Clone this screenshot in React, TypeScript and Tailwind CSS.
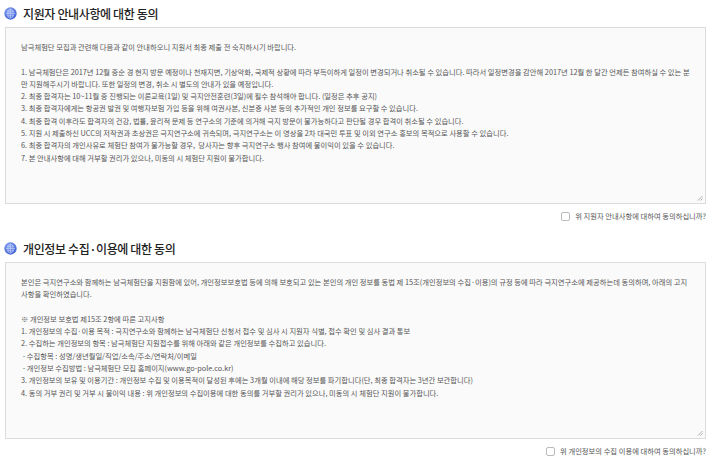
import React from "react";

const FONT = { fontFamily: '"Noto Sans CJK KR", "Noto Sans", sans-serif' };

const NOTICE = [
  "남극체험단 모집과 관련해 다음과 같이 안내하오니 지원서 최종 제출 전 숙지하시기 바랍니다.",
  "",
  "1. 남극체험단은 2017년 12월 중순 경 현지 방문 예정이나 천재지변, 기상악화, 국제적 상황에 따라 부득이하게 일정이 변경되거나 취소될 수 있습니다. 따라서 일정변경을 감안해 2017년 12월 한 달간 언제든 참여하실 수 있는 분만 지원해주시기 바랍니다. 또한 일정의 변경, 취소 시 별도의 안내가 있을 예정입니다.",
  "2. 최종 합격자는 10~11월 중 진행되는 이론교육(1일) 및 극지안전훈련(3일)에 필수 참석해야 합니다. (일정은 추후 공지)",
  "3. 최종 합격자에게는 항공권 발권 및 여행자보험 가입 등을 위해 여권사본, 신분증 사본 등의 추가적인 개인 정보를 요구할 수 있습니다.",
  "4. 최종 합격 이후라도 합격자의 건강, 법률, 윤리적 문제 등 연구소의 기준에 의거해 극지 방문이 불가능하다고 판단될 경우 합격이 취소될 수 있습니다.",
  "5. 지원 시 제출하신 UCC의 저작권과 초상권은 극지연구소에 귀속되며, 극지연구소는 이 영상을 2차 대국민 투표 및 이외 연구소 홍보의 목적으로 사용할 수 있습니다.",
  "6. 최종 합격자의 개인사유로 체험단 참여가 불가능할 경우,  당사자는 향후 극지연구소 행사 참여에 불이익이 있을 수 있습니다.",
  "7. 본 안내사항에 대해 거부할 권리가 있으나, 미동의 시 체험단 지원이 불가합니다.",
];

const PRIVACY = [
  "본인은 극지연구소와 함께하는 남극체험단을 지원함에 있어, 개인정보보호법 등에 의해 보호되고 있는 본인의 개인 정보를 동법 제 15조(개인정보의 수집·이용)의 규정 등에 따라 극지연구소에 제공하는데 동의하며, 아래의 고지사항을 확인하였습니다.",
  "",
  "※ 개인정보 보호법 제15조 2항에 따른 고지사항",
  "1. 개인정보의 수집·이용 목적 : 극지연구소와 함께하는 남극체험단 신청서 접수 및 심사 시 지원자 식별, 접수 확인 및 심사 결과 통보",
  "2. 수집하는 개인정보의 항목 : 남극체험단 지원접수를 위해 아래와 같은 개인정보를 수집하고 있습니다.",
  " - 수집항목 : 성명/생년월일/직업/소속/주소/연락처/이메일",
  " - 개인정보 수집방법 : 남극체험단 모집 홈페이지(www.go-pole.co.kr)",
  "3. 개인정보의 보유 및 이용기간 : 개인정보 수집 및 이용목적이 달성된 후에는 3개월 이내에 해당 정보를 파기합니다(단, 최종 합격자는 3년간 보관합니다)",
  "4. 동의 거부 권리 및 거부 시 불이익 내용 : 위 개인정보의 수집이용에 대한 동의를 거부할 권리가 있으나, 미동의 시 체험단 지원이 불가합니다.",
];

function GlobeIcon() {
  return (
    <svg width="13" height="13" viewBox="0 0 20 20" className="shrink-0">
      <defs>
        <radialGradient id="g" cx="40%" cy="35%" r="70%">
          <stop offset="0%" stopColor="#8aa6f5" />
          <stop offset="100%" stopColor="#3d5fd4" />
        </radialGradient>
      </defs>
      <circle cx="10" cy="10" r="9.5" fill="url(#g)" />
      <g fill="none" stroke="#dbe4ff" strokeWidth="1" opacity="0.8">
        <ellipse cx="10" cy="10" rx="4" ry="7" />
        <path d="M3 10h14M4.5 6.5h11M4.5 13.5h11M10 3v14" />
      </g>
    </svg>
  );
}

function Section({ title, lines, agree }: { title: string; lines: string[]; agree: string }) {
  return (
    <section className="flex flex-col">
      <h2 className="flex h-[27px] items-center gap-[6px] pl-[4px] text-[12px] font-medium text-[#222]">
        <GlobeIcon />
        <span className="tracking-[-0.03em]">{title}</span>
      </h2>
      <div className="relative ml-[5px] h-[177px] w-[701px] border border-[#dcdcdc] bg-[#fafafa] px-[15px] pt-[13px] text-[7.3px] leading-[12.3px] text-[#555] break-all">
        {lines.map((l, i) => (
          <p key={i} className="min-h-[12.3px] whitespace-pre-wrap">
            {l}
          </p>
        ))}
        <svg width="6" height="6" viewBox="0 0 6 6" className="absolute bottom-[2px] right-[2px]">
          <path d="M5.5 1L1 5.5M5.5 3.5L3.5 5.5" stroke="#999" strokeWidth="0.8" />
        </svg>
      </div>
      <label className="mb-[7px] flex h-[24px] w-[706px] items-center justify-end gap-[5px] text-[7.3px] text-[#555]">
        <span className="h-[9px] w-[9px] rounded-[2px] border border-[#bbb] bg-white" />
        <span>{agree}</span>
      </label>
    </section>
  );
}

export default function App() {
  return (
    <div className="h-[470px] w-[720px] overflow-hidden bg-white" style={FONT}>
      <Section title="지원자 안내사항에 대한 동의" lines={NOTICE} agree="위 지원자 안내사항에 대하여 동의하십니까?" />
      <Section title="개인정보 수집·이용에 대한 동의" lines={PRIVACY} agree="위 개인정보의 수집 이용에 대하여 동의하십니까?" />
    </div>
  );
}
